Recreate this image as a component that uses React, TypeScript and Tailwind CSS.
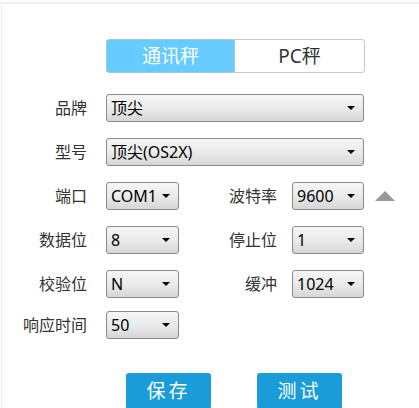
import React, { useState } from 'react'

type Opt = { label: string; value: string; width: string }

const font = { fontFamily: '"Noto Sans", "Noto Sans CJK SC", sans-serif' }

function Select({ value, width }: { value: string; width: string }) {
  return (
    <div
      className={`${width} h-[28px] flex items-center justify-between pl-[4px] pr-[8px] rounded-[3px] border border-[#8a8a8a] bg-gradient-to-b from-[#f6f6f6] via-[#ebebeb] to-[#d6d6d6] text-[16px] text-black leading-none`}
    >
      <span>{value}</span>
      <span className="w-0 h-0 border-l-[4px] border-r-[4px] border-t-[4px] border-l-transparent border-r-transparent border-t-black" />
    </div>
  )
}

function Label({ text, width }: { text: string; width: string }) {
  return <span className={`${width} text-right text-[16px] text-[#333] shrink-0`}>{text}</span>
}

export default function App() {
  const [tab, setTab] = useState<'tx' | 'pc'>('tx')

  // 两列的行
  const rows: [Opt, Opt][] = [
    [
      { label: '端口', value: 'COM1', width: 'w-[73px]' },
      { label: '波特率', value: '9600', width: 'w-[72px]' },
    ],
    [
      { label: '数据位', value: '8', width: 'w-[73px]' },
      { label: '停止位', value: '1', width: 'w-[72px]' },
    ],
    [
      { label: '校验位', value: 'N', width: 'w-[73px]' },
      { label: '缓冲', value: '1024', width: 'w-[72px]' },
    ],
  ]

  return (
    <div className="w-[419px] h-[408px] overflow-hidden bg-white pt-[2px] pl-[1px]" style={font}>
      <div className="h-full border-t-2 border-l border-[#f0f0f0] bg-white">
        {/* tabs */}
        <div className="flex mt-[35px] ml-[104px]">
          <button
            onClick={() => setTab('tx')}
            className={`w-[129px] h-[34px] text-[19px] rounded-l-[3px] border ${
              tab === 'tx' ? 'bg-[#66ccff] text-white border-[#a9c9d9]' : 'bg-white text-[#333] border-[#c8c8c8]'
            }`}
          >
            通讯秤
          </button>
          <button
            onClick={() => setTab('pc')}
            className={`w-[130px] h-[34px] text-[19px] rounded-r-[3px] border border-l-0 ${
              tab === 'pc' ? 'bg-[#66ccff] text-white border-[#a9c9d9]' : 'bg-white text-[#333] border-[#c8c8c8]'
            }`}
          >
            PC秤
          </button>
        </div>

        <div className="flex flex-col gap-[16px] mt-[21px]">
          <div className="flex items-center">
            <Label text="品牌" width="w-[85px]" />
            <div className="ml-[19px]">
              <Select value="顶尖" width="w-[258px]" />
            </div>
          </div>
          <div className="flex items-center">
            <Label text="型号" width="w-[85px]" />
            <div className="ml-[19px]">
              <Select value="顶尖(OS2X)" width="w-[258px]" />
            </div>
          </div>

          {rows.map(([l, r], i) => (
            <div key={i} className="flex items-center">
              <Label text={l.label} width="w-[85px]" />
              <div className="ml-[19px]">
                <Select value={l.value} width={l.width} />
              </div>
              <Label text={r.label} width="w-[98px]" />
              <div className="ml-[15px]">
                <Select value={r.value} width={r.width} />
              </div>
              {i === 0 && (
                <span className="ml-[11px] w-0 h-0 border-l-[10px] border-r-[10px] border-b-[10px] border-l-transparent border-r-transparent border-b-[#999]" />
              )}
            </div>
          ))}

          <div className="flex items-center mt-[-3px]">
            <Label text="响应时间" width="w-[85px]" />
            <div className="ml-[19px]">
              <Select value="50" width="w-[73px]" />
            </div>
          </div>
        </div>

        <div className="flex mt-[34px] ml-[124px] gap-[46px]">
          <button className="w-[85px] h-[36px] rounded-[3px] bg-[#1a9cd8] text-white text-[19px] tracking-[3px]">
            保存
          </button>
          <button className="w-[85px] h-[36px] rounded-[3px] bg-[#1a9cd8] text-white text-[19px] tracking-[3px]">
            测试
          </button>
        </div>
      </div>
    </div>
  )
}
